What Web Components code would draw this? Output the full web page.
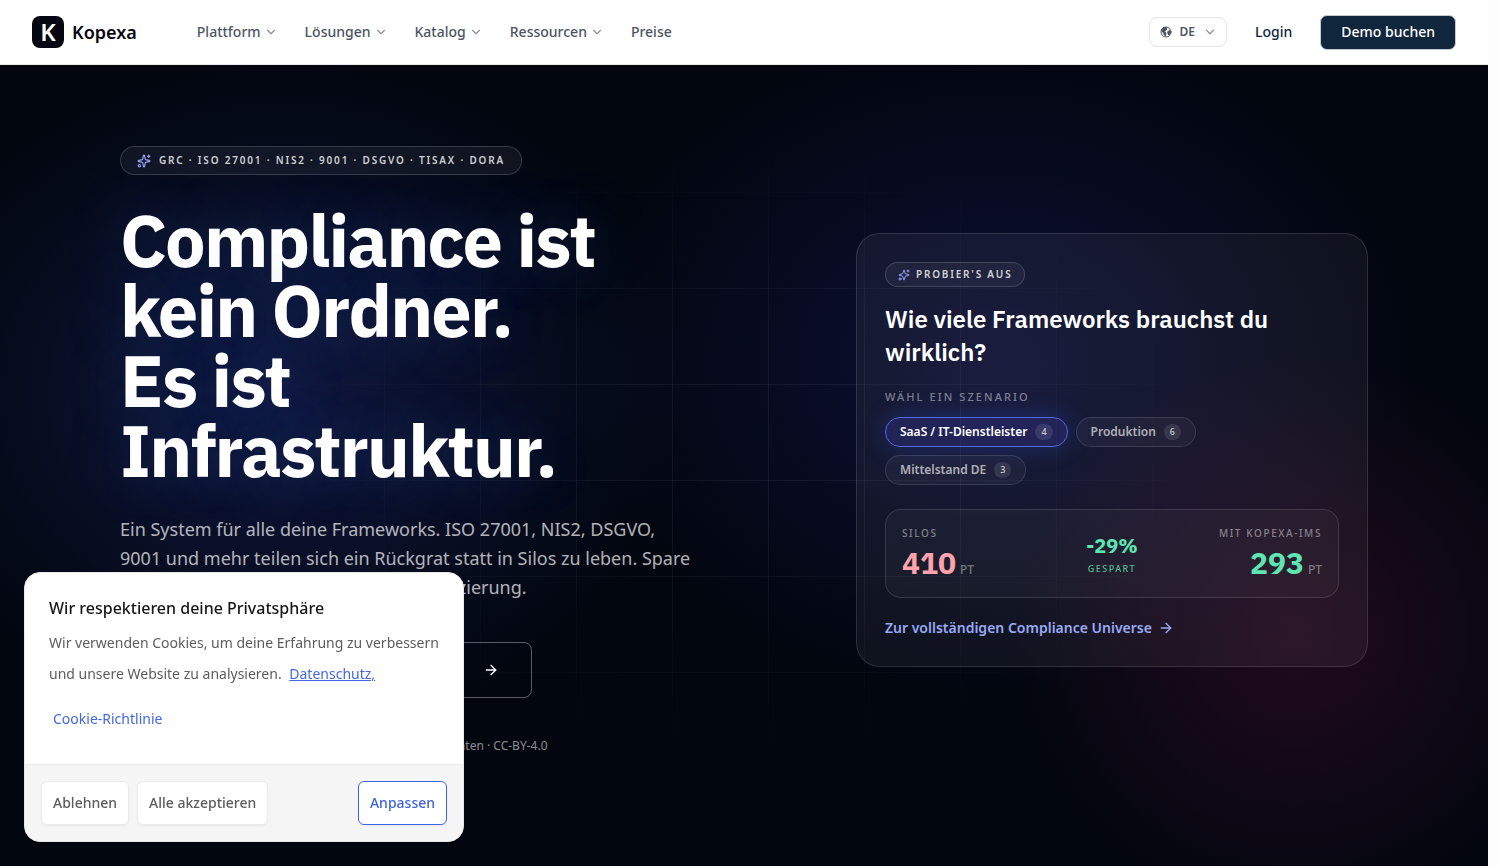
<!DOCTYPE html>
<html lang="de">
<head>
<meta charset="utf-8">
<meta name="viewport" content="width=device-width, initial-scale=1">
<title>Kopexa</title>
<style>
  :root {
    --font-body: "Noto Sans", "Open Sans", sans-serif;
    --font-display: "IBM Plex Sans", "Noto Sans", sans-serif;
    --ink: #10263d;
    --line: rgba(255, 255, 255, 0.12);
  }

  body {
    margin: 0 12px 0 0;
    background: #fdfdfd;
    font-family: var(--font-body);
    font-size: 14px;
    line-height: 20px;
  }
</style>
</head>
<body>
<kx-header></kx-header>
<kx-hero>
  <kx-intro></kx-intro>
  <kx-savings></kx-savings>
</kx-hero>
<kx-cookies></kx-cookies>

<script>
// Stroke icons on a 24 unit grid
const ICONS = {
  chevron: `<path d="m6 9 6 6 6-6"/>`,
  arrow: `<path d="M5 12h14"/><path d="m12 5 7 7-7 7"/>`,
  sparkles: `
    <path d="M11.017 2.814a1 1 0 0 1 1.966 0l1.051 5.558a2 2 0 0 0 1.594 1.594l5.558 1.051a1 1 0 0 1 0 1.966l-5.558 1.051a2 2 0 0 0-1.594 1.594l-1.051 5.558a1 1 0 0 1-1.966 0l-1.051-5.558a2 2 0 0 0-1.594-1.594l-5.558-1.051a1 1 0 0 1 0-1.966l5.558-1.051a2 2 0 0 0 1.594-1.594z"/>
    <path d="M20 2v4"/><path d="M22 4h-4"/><circle cx="4" cy="20" r="2"/>`,
  earth: `
    <circle cx="12" cy="12" r="10"/>
    <path fill="currentColor" d="M7 3.5 12 3l2 3-3 3-2 3 3 2-1 6-3-3v-3l-4-3-1-3z"/>
    <path fill="currentColor" d="m16 11 4-2 1 4-3 5-2-3z"/>`,
};

class BaseElement extends HTMLElement
{
  constructor()
  {
    super();
    this.attachShadow({mode: "open"});
  }

  connectedCallback()
  {
    this.render();
  }

  render()
  {
    this.shadowRoot.innerHTML = `
      <style>
        * { box-sizing: border-box; }
        a { color: inherit; text-decoration: none; }
        button { font: inherit; color: inherit; background: none; border: 0; padding: 0; cursor: pointer; }
        h1, h2, p, dl, dd { margin: 0; }
        ${this.styleCSS()}
      </style>
      ${this.template()}
    `;
  }

  styleCSS() { return ""; }
  template() { return ""; }
}

class Icon extends BaseElement
{
  styleCSS()
  {
    return `
      :host { display: inline-flex; flex: none; width: 14px; height: 14px; }
      svg { width: 100%; height: 100%; }
    `;
  }

  template()
  {
    return `
      <svg viewBox="0 0 24 24" fill="none" stroke="currentColor" stroke-width="2"
        stroke-linecap="round" stroke-linejoin="round" aria-hidden="true">${ICONS[this.getAttribute("name")]}</svg>
    `;
  }
}

class Badge extends BaseElement
{
  styleCSS()
  {
    return `
      :host {
        display: inline-flex;
        align-items: center;
        gap: 8px;
        padding: 6px 16px;
        border: 1px solid rgba(255, 255, 255, 0.16);
        border-radius: 999px;
        background: rgba(255, 255, 255, 0.05);
        color: rgba(255, 255, 255, 0.8);
        font-size: 10px;
        line-height: 15px;
        font-weight: 600;
        letter-spacing: 0.18em;
        text-transform: uppercase;
      }
      :host([small]) { gap: 6px; padding: 4px 12px; }
      :host([small]) kx-icon { width: 12px; height: 12px; }
      kx-icon { color: #93a5ff; }
    `;
  }

  template()
  {
    return `<kx-icon name="sparkles"></kx-icon><slot></slot>`;
  }
}

class Header extends BaseElement
{
  styleCSS()
  {
    return `
      :host { display: block; background: #fff; border-bottom: 1px solid #e5e7eb; }
      header { display: flex; align-items: center; height: 64px; padding: 0 32px; font-weight: 500; }
      .brand { display: flex; align-items: center; gap: 8px; margin-right: 60px; color: #05070f; font-size: 18px; font-weight: 600; }
      .mark {
        display: grid;
        place-items: center;
        width: 32px;
        height: 32px;
        border-radius: 8px;
        background: #030712;
        color: #fff;
        font-size: 24px;
        font-weight: 600;
      }
      nav { display: flex; gap: 27px; color: #4b5563; }
      nav button, .lang { display: flex; align-items: center; gap: 3px; }
      nav kx-icon, .lang kx-icon:last-child { color: #8b929c; }
      .actions { display: flex; align-items: center; gap: 28px; margin-left: auto; color: var(--ink); }
      .lang {
        gap: 8px;
        height: 30px;
        padding: 0 9px 0 10px;
        border: 1px solid #e2e5e9;
        border-radius: 8px;
        color: #4b5563;
        font-size: 12px;
        font-weight: 600;
      }
      .lang kx-icon:first-child { width: 12px; height: 12px; }
      .demo { padding: 6px 20px 7px; border: 1px solid #c3cad2; border-radius: 7px; background: var(--ink); color: #fff; }
    `;
  }

  template()
  {
    const menus = ["Plattform", "Lösungen", "Katalog", "Ressourcen"];

    return `
      <header>
        <a class="brand" href="#"><span class="mark" aria-hidden="true">K</span>Kopexa</a>
        <nav>
          ${menus.map((menu) => `<button type="button">${menu}<kx-icon name="chevron"></kx-icon></button>`).join("")}
          <a href="#preise">Preise</a>
        </nav>
        <div class="actions">
          <button class="lang" type="button"><kx-icon name="earth"></kx-icon>DE<kx-icon name="chevron"></kx-icon></button>
          <a href="#login">Login</a>
          <a class="demo" href="#demo">Demo buchen</a>
        </div>
      </header>
    `;
  }
}

class Hero extends BaseElement
{
  styleCSS()
  {
    return `
      :host {
        display: block;
        position: relative;
        min-height: calc(100vh - 65px);
        padding: 81px 32px;
        box-sizing: border-box;
        overflow: hidden;
        color: #fff;
        background:
          radial-gradient(circle at 87% 71%, rgba(140, 25, 85, 0.23), transparent 280px),
          radial-gradient(ellipse 420px 330px at 67% 37%, rgba(48, 46, 160, 0.26), transparent),
          radial-gradient(ellipse 400px 330px at 19% 41%, rgba(50, 66, 170, 0.3), transparent),
          #02060f;
      }
      .grid {
        position: absolute;
        inset: 0;
        background:
          linear-gradient(rgba(255, 255, 255, 0.06) 1px, transparent 1px) 0 31px / 96px 96px,
          linear-gradient(90deg, rgba(255, 255, 255, 0.06) 1px, transparent 1px) 0 0 / 96px 96px;
        -webkit-mask-image: radial-gradient(ellipse 480px 320px at 50% 48%, #000 30%, transparent);
        mask-image: radial-gradient(ellipse 480px 320px at 50% 48%, #000 30%, transparent);
      }
      .content {
        position: relative;
        display: grid;
        grid-template-columns: minmax(0, 1fr) minmax(0, 512px);
        align-items: center;
        gap: 64px;
        max-width: 1248px;
        margin: 0 auto;
      }
    `;
  }

  template()
  {
    return `
      <div class="grid"></div>
      <div class="content"><slot></slot></div>
    `;
  }
}

class Intro extends BaseElement
{
  styleCSS()
  {
    return `
      :host { display: block; max-width: 576px; }
      h1 {
        margin-top: 30px;
        font: 700 72px/70px var(--font-display);
        letter-spacing: -0.025em;
        text-shadow: 0 0 60px rgba(80, 125, 220, 0.3);
      }
      .lead { margin-top: 30px; color: rgba(255, 255, 255, 0.7); font-size: 18px; line-height: 29px; }
      .action {
        display: flex;
        align-items: center;
        justify-content: flex-end;
        width: 412px;
        max-width: 100%;
        height: 56px;
        margin-top: 40px;
        padding: 0 32px;
        border: 1px solid rgba(255, 255, 255, 0.35);
        border-radius: 8px;
      }
      .action kx-icon { width: 16px; height: 16px; }
      .note { margin-top: 40px; color: rgba(255, 255, 255, 0.55); font-size: 12px; line-height: 16px; }
    `;
  }

  template()
  {
    return `
      <kx-badge>GRC · ISO 27001 · NIS2 · 9001 · DSGVO · TISAX · DORA</kx-badge>
      <h1>Compliance ist<br>kein Ordner.<br>Es ist<br>Infrastruktur.</h1>
      <p class="lead">Ein System für alle deine Frameworks. ISO 27001, NIS2, DSGVO, 9001 und mehr teilen sich ein Rückgrat statt in Silos zu leben. Spare dir die doppelte Arbeit an jeder Rezertifizierung.</p>
      <a class="action" href="#universe" aria-label="Universe"><kx-icon name="arrow"></kx-icon></a>
      <p class="note">Kostenlos nutzbar · Ohne Anmeldung · Offene Framework-Daten · CC-BY-4.0</p>
    `;
  }
}

class Savings extends BaseElement
{
  styleCSS()
  {
    return `
      :host {
        display: block;
        box-sizing: border-box;
        padding: 28px;
        border: 1px solid var(--line);
        border-radius: 24px;
        background: rgba(255, 255, 255, 0.05);
      }
      kx-badge { display: flex; width: fit-content; }
      h2 { margin-top: 16px; font: 600 24px/33px var(--font-display); }
      .label {
        margin: 20px 0 12px;
        color: rgba(255, 255, 255, 0.45);
        font-size: 11px;
        line-height: 16px;
        font-weight: 500;
        letter-spacing: 0.19em;
        text-transform: uppercase;
      }
      .chips { display: flex; flex-wrap: wrap; gap: 8px; max-width: 400px; }
      .chips button {
        display: flex;
        align-items: center;
        gap: 8px;
        height: 30px;
        padding: 0 14px;
        border: 1px solid var(--line);
        border-radius: 999px;
        background: rgba(255, 255, 255, 0.04);
        color: rgba(255, 255, 255, 0.65);
        font-size: 12px;
        line-height: 16px;
        font-weight: 600;
      }
      .chips [aria-pressed="true"] {
        border-color: #5468d8;
        background: rgba(70, 70, 200, 0.24);
        box-shadow: 0 0 24px rgba(50, 100, 255, 0.3);
        color: #fff;
      }
      .count {
        padding: 0 6px;
        border-radius: 999px;
        background: rgba(255, 255, 255, 0.1);
        font-size: 9px;
        font-weight: 500;
        color: rgba(255, 255, 255, 0.75);
      }
      .stats {
        display: grid;
        grid-template-columns: 1fr auto 1fr;
        align-items: center;
        height: 89px;
        margin: 24px 0 20px;
        padding: 0 16px;
        border: 1px solid var(--line);
        border-radius: 16px;
        background: rgba(255, 255, 255, 0.03);
      }
      .caption {
        color: rgba(255, 255, 255, 0.45);
        font-size: 10px;
        line-height: 15px;
        font-weight: 500;
        letter-spacing: 0.16em;
        text-transform: uppercase;
      }
      .value { font: 700 30px/36px var(--font-display); margin-top: 4px; }
      .value span { font: 500 12px/16px var(--font-body); color: rgba(255, 255, 255, 0.4); margin-left: 4px; }
      .silos .value { color: #ffa2ac; }
      .ims { text-align: right; }
      .ims .value, .saved { color: #5ee6b2; }
      .saved { display: flex; flex-direction: column-reverse; gap: 2px; text-align: center; }
      .saved .value { margin: 0; font-size: 20px; line-height: 28px; }
      .saved .caption { color: inherit; opacity: 0.8; font-size: 9px; line-height: 14px; }
      .more { display: flex; align-items: center; gap: 6px; width: fit-content; color: #98a9f5; font-weight: 600; }
      .more kx-icon { width: 16px; height: 16px; }
    `;
  }

  template()
  {
    const scenarios = [["SaaS / IT-Dienstleister", 4], ["Produktion", 6], ["Mittelstand DE", 3]];

    return `
      <kx-badge small>Probier's aus</kx-badge>
      <h2>Wie viele Frameworks brauchst du wirklich?</h2>
      <p class="label">Wähl ein Szenario</p>
      <div class="chips">
        ${scenarios.map(([name, count], i) => `
          <button type="button" aria-pressed="${i === 0}">${name}<span class="count">${count}</span></button>
        `).join("")}
      </div>
      <dl class="stats">
        <div class="silos"><dt class="caption">Silos</dt><dd class="value">410<span>PT</span></dd></div>
        <div class="saved"><dt class="caption">gespart</dt><dd class="value">-29%</dd></div>
        <div class="ims"><dt class="caption">mit Kopexa-IMS</dt><dd class="value">293<span>PT</span></dd></div>
      </dl>
      <a class="more" href="#universe">Zur vollständigen Compliance Universe<kx-icon name="arrow"></kx-icon></a>
    `;
  }
}

class Cookies extends BaseElement
{
  styleCSS()
  {
    return `
      :host {
        display: block;
        position: fixed;
        left: 24px;
        bottom: 24px;
        width: 440px;
        max-width: calc(100vw - 48px);
        box-sizing: border-box;
        overflow: hidden;
        border: 1px solid #e8e8e8;
        border-radius: 16px;
        background: #fff;
        color: #5c5c5c;
      }
      .text { padding: 24px 16px 24px 24px; }
      h2 { color: #171717; font-size: 16px; line-height: 22px; font-weight: 500; }
      p { margin-top: 8px; line-height: 31px; }
      .text a { color: #4468e4; padding: 0 4px; }
      .text p a { text-decoration: underline; }
      .policy { display: flex; align-items: center; width: fit-content; height: 43px; margin-top: 8px; }
      footer { display: flex; gap: 8px; padding: 16px; border-top: 1px solid #ebebeb; background: #f5f5f5; }
      button {
        height: 44px;
        padding: 0 11px;
        border: 1px solid #ebebeb;
        border-radius: 6px;
        background: #fff;
        box-shadow: 0 1px 2px rgba(0, 0, 0, 0.05);
        font-weight: 500;
      }
      .adjust { margin-left: auto; border-color: #3f62e0; color: #3f62e0; }
    `;
  }

  template()
  {
    return `
      <div class="text">
        <h2>Wir respektieren deine Privatsphäre</h2>
        <p>Wir verwenden Cookies, um deine Erfahrung zu verbessern und unsere Website zu analysieren. <a href="#datenschutz">Datenschutz,</a></p>
        <a class="policy" href="#cookies">Cookie-Richtlinie</a>
      </div>
      <footer>
        <button type="button">Ablehnen</button>
        <button type="button">Alle akzeptieren</button>
        <button class="adjust" type="button">Anpassen</button>
      </footer>
    `;
  }
}

customElements.define("kx-icon", Icon);
customElements.define("kx-badge", Badge);
customElements.define("kx-header", Header);
customElements.define("kx-hero", Hero);
customElements.define("kx-intro", Intro);
customElements.define("kx-savings", Savings);
customElements.define("kx-cookies", Cookies);
</script>
</body>
</html>
